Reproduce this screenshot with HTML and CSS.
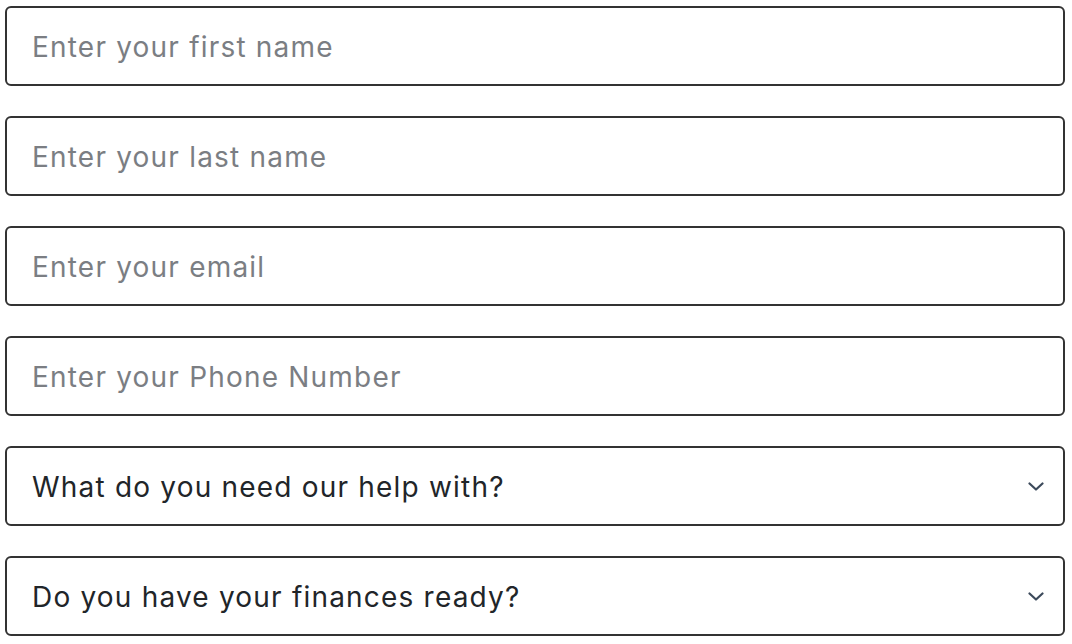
FILE: index.html
```html
<!DOCTYPE html>
<html lang="en">
<head>
  <meta charset="UTF-8">
  <meta name="viewport" content="width=device-width, initial-scale=1.0">
  <link rel="stylesheet" href="styles.css">
</head>
<body>
  <form class="contact-form">
    <input class="field" type="text" placeholder="Enter your first name">
    <input class="field" type="text" placeholder="Enter your last name">
    <input class="field" type="email" placeholder="Enter your email">
    <input class="field" type="tel" placeholder="Enter your Phone Number">
    <div class="select-wrap">
      <select class="field select">
        <option>What do you need our help with?</option>
        <option>Buying a home</option>
        <option>Refinancing</option>
      </select>
      <svg class="chevron" viewBox="0 0 16 9" width="16" height="9">
        <path d="M1.5 1.5l6.5 6 6.5-6" fill="none" stroke="#3c4a5b" stroke-width="2.2" stroke-linecap="round" stroke-linejoin="round"/>
      </svg>
    </div>
    <div class="select-wrap">
      <select class="field select">
        <option>Do you have your finances ready?</option>
        <option>Yes</option>
        <option>No</option>
      </select>
      <svg class="chevron" viewBox="0 0 16 9" width="16" height="9">
        <path d="M1.5 1.5l6.5 6 6.5-6" fill="none" stroke="#3c4a5b" stroke-width="2.2" stroke-linecap="round" stroke-linejoin="round"/>
      </svg>
    </div>
  </form>
</body>
</html>
```

FILE: styles.css
```css
body {
  margin: 0;
  font-family: Inter, "Noto Sans", sans-serif;
  background: #fff;
}

.contact-form {
  display: flex;
  flex-direction: column;
  gap: 30px;
  width: 1060px;
  padding: 6px 0 0 5px;
}

.field {
  box-sizing: border-box;
  width: 100%;
  height: 80px;
  margin: 0;
  padding: 2px 25px 0;
  border: 2px solid #333;
  border-radius: 6px;
  background: #fff;
  font-family: inherit;
  font-size: 28px;
  letter-spacing: 1.2px;
  color: #212529;
  outline: none;
}

.field::placeholder {
  color: #7b7e83;
  opacity: 1;
}

.select-wrap {
  position: relative;
}

.select {
  appearance: none;
  -webkit-appearance: none;
}

.chevron {
  position: absolute;
  right: 21px;
  top: 36px;
  pointer-events: none;
}
```
